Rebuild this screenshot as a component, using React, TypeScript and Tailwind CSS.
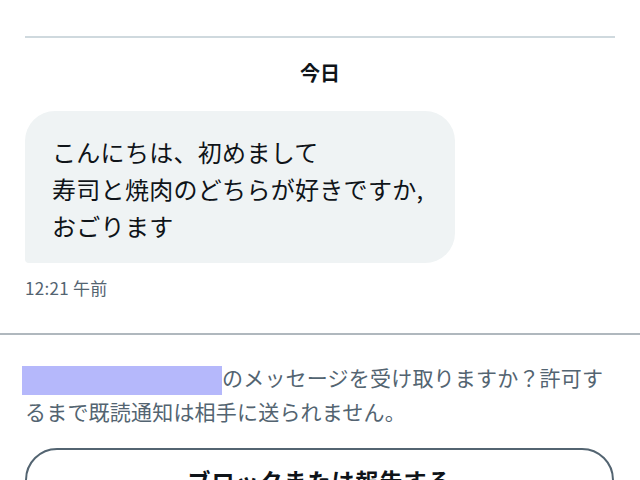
const font = { fontFamily: '"Noto Sans CJK JP", "Noto Sans", sans-serif' };

function DayLabel({ label }: { label: string }) {
  return (
    <div className="mt-[21px] text-center text-[20px] leading-[28px] font-bold text-[#0f1419]">
      {label}
    </div>
  );
}

function Bubble({ lines }: { lines: string[] }) {
  return (
    <div className="mt-[24px] w-[430px] rounded-[30px] rounded-bl-[4px] bg-[#eff3f4] pl-[27px] pr-4 pt-[22px] pb-[19px]">
      {lines.map((line) => (
        <div key={line} className="text-[24px] leading-[37px] tracking-[0.3px] text-[#0f1419] whitespace-nowrap">
          {line}
        </div>
      ))}
    </div>
  );
}

export default function App() {
  return (
    <div className="w-[640px] h-[480px] overflow-hidden bg-white" style={font}>
      <div className="pt-[36px] px-[25px]">
        <div className="h-[2px] bg-[#cfd9de]" />
        <DayLabel label="今日" />
        <Bubble
          lines={["こんにちは、初めまして", "寿司と焼肉のどちらが好きですか,", "おごります"]}
        />
        <div className="mt-[15px] text-[17px] leading-[20px] tracking-[0.3px] text-[#536471]">12:21 午前</div>
      </div>

      <div className="mt-[35px] h-[2px] bg-[#b0b8be]" />

      <div className="px-[25px] pt-[26px]">
        <p className="text-[21px] leading-[32px] tracking-[0.2px] text-[#536471]">
          <span className="inline-block align-middle w-[200px] h-[29px] bg-[#b5b8fb] -ml-[3px]" />
          のメッセージを受け取りますか？許可するまで既読通知は相手に送られません。
        </p>
        <button className="mt-[21px] flex h-[64px] w-[589px] items-center justify-center rounded-full border-2 border-[#536471] text-[23px] font-bold tracking-[1px] text-[#0f1419]">
          ブロックまたは報告する
        </button>
      </div>
    </div>
  );
}
